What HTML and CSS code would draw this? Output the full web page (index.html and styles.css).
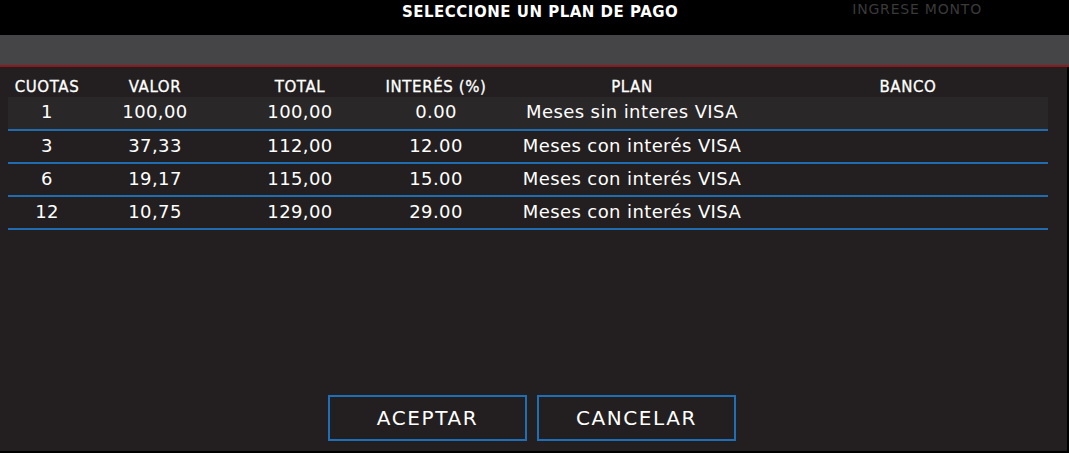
FILE: index.html
```html
<!DOCTYPE html>
<html lang="es">
<head>
<meta charset="utf-8">
<title>Plan de pago</title>
<link rel="stylesheet" href="styles.css">
</head>
<body>
<div class="topbar">
  <div class="title">SELECCIONE UN PLAN DE PAGO</div>
  <div class="monto">INGRESE MONTO</div>
</div>
<div class="graybar"></div>
<div class="panel">
  <table class="plans">
    <colgroup>
      <col class="c1"><col class="c2"><col class="c3"><col class="c4"><col class="c5"><col class="c6">
    </colgroup>
    <thead>
      <tr><th>CUOTAS</th><th>VALOR</th><th>TOTAL</th><th>INTERÉS (%)</th><th>PLAN</th><th>BANCO</th></tr>
    </thead>
    <tbody>
      <tr class="active"><td>1</td><td>100,00</td><td>100,00</td><td>0.00</td><td>Meses sin interes VISA</td><td></td></tr>
      <tr><td>3</td><td>37,33</td><td>112,00</td><td>12.00</td><td>Meses con interés VISA</td><td></td></tr>
      <tr><td>6</td><td>19,17</td><td>115,00</td><td>15.00</td><td>Meses con interés VISA</td><td></td></tr>
      <tr><td>12</td><td>10,75</td><td>129,00</td><td>29.00</td><td>Meses con interés VISA</td><td></td></tr>
    </tbody>
  </table>
  <div class="actions">
    <button class="btn">ACEPTAR</button>
    <button class="btn">CANCELAR</button>
  </div>
</div>
</body>
</html>
```
FILE: styles.css
```css
html, body {
  margin: 0;
  padding: 0;
  background: #000;
  font-family: "DejaVu Sans", "Open Sans", sans-serif;
  color: #fff;
}
.topbar {
  height: 35px;
  display: flex;
  align-items: flex-start;
  background: #000;
}
.title {
  margin-left: 402px;
  margin-top: 3px;
  font-size: 15px;
  font-weight: 700;
  letter-spacing: 0.5px;
}
.monto {
  margin-left: auto;
  margin-right: 87px;
  margin-top: 1px;
  font-size: 14px;
  letter-spacing: 0.8px;
  color: #3a3a3a;
}
.graybar {
  height: 30px;
  background: #454547;
  border-bottom: 2px solid #8b1a20;
}
.panel {
  width: 1067px;
  height: 384px;
  background: #231f20;
  display: flex;
  flex-direction: column;
  padding: 0 8px;
  box-sizing: border-box;
}
.plans {
  width: 1040px;
  border-collapse: collapse;
  table-layout: fixed;
}
.c1 { width: 78px; }
.c2 { width: 138px; }
.c3 { width: 152px; }
.c4 { width: 120px; }
.c5 { width: 272px; }
.c6 { width: 280px; }
.plans th {
  height: 30px;
  padding: 10px 0 0;
  box-sizing: border-box;
  font-size: 15px;
  font-weight: 400;
  letter-spacing: 0.6px;
  -webkit-text-stroke: 0.3px #fff;
  text-align: center;
  vertical-align: middle;
}
.plans td {
  height: 33px;
  padding: 0 0 3px;
  font-size: 18px;
  letter-spacing: 0.4px;
  text-align: center;
  border-bottom: 2px solid #1f6cb0;
  box-sizing: border-box;
}
.plans tr.active td {
  background: #2a2728;
}
.actions {
  margin-top: auto;
  margin-bottom: 10px;
  display: flex;
  justify-content: center;
  gap: 10px;
  padding-right: 3px;
}
.btn {
  width: 199px;
  height: 46px;
  background: #231f20;
  border: 2px solid #1d6fb8;
  color: #fff;
  font-family: inherit;
  font-size: 20px;
  letter-spacing: 1.6px;
  padding: 0;
}
```
